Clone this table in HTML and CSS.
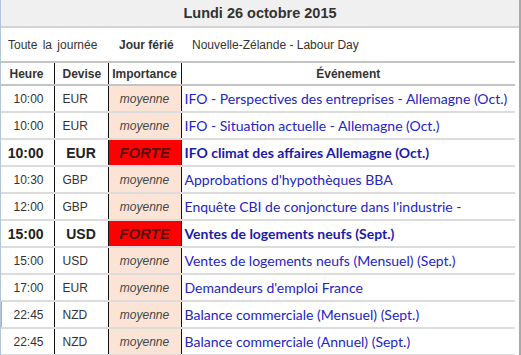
FILE: index.html
```html
<!DOCTYPE html>
<html lang="fr">
<head>
<meta charset="utf-8">
<title>Calendrier économique</title>
<link rel="stylesheet" href="styles.css">
</head>
<body>
<div class="panel">
  <div class="title">Lundi 26 octobre 2015</div>
  <div class="holiday">
    <span class="h-time">Toute la journée</span>
    <span class="h-label">Jour férié</span>
    <span class="h-text">Nouvelle-Zélande - Labour Day</span>
  </div>
  <table class="cal">
    <thead>
      <tr>
        <th class="c-time">Heure</th>
        <th class="c-cur">Devise</th>
        <th class="c-imp">Importance</th>
        <th class="c-ev">Événement</th>
      </tr>
    </thead>
    <tbody>
      <tr><td class="c-time">10:00</td><td class="c-cur">EUR</td><td class="c-imp">moyenne</td><td class="c-ev">IFO - Perspectives des entreprises - Allemagne (Oct.)</td></tr>
      <tr><td class="c-time">10:00</td><td class="c-cur">EUR</td><td class="c-imp">moyenne</td><td class="c-ev">IFO - Situation actuelle - Allemagne (Oct.)</td></tr>
      <tr class="strong"><td class="c-time">10:00</td><td class="c-cur">EUR</td><td class="c-imp">FORTE</td><td class="c-ev">IFO climat des affaires Allemagne (Oct.)</td></tr>
      <tr><td class="c-time">10:30</td><td class="c-cur">GBP</td><td class="c-imp">moyenne</td><td class="c-ev">Approbations d'hypothèques BBA</td></tr>
      <tr><td class="c-time">12:00</td><td class="c-cur">GBP</td><td class="c-imp">moyenne</td><td class="c-ev">Enquête CBI de conjoncture dans l'industrie -</td></tr>
      <tr class="strong"><td class="c-time">15:00</td><td class="c-cur">USD</td><td class="c-imp">FORTE</td><td class="c-ev">Ventes de logements neufs (Sept.)</td></tr>
      <tr><td class="c-time">15:00</td><td class="c-cur">USD</td><td class="c-imp">moyenne</td><td class="c-ev">Ventes de logements neufs (Mensuel) (Sept.)</td></tr>
      <tr><td class="c-time">17:00</td><td class="c-cur">EUR</td><td class="c-imp">moyenne</td><td class="c-ev">Demandeurs d'emploi France</td></tr>
      <tr class="marked"><td class="c-time">22:45</td><td class="c-cur">NZD</td><td class="c-imp">moyenne</td><td class="c-ev">Balance commerciale (Mensuel) (Sept.)</td></tr>
      <tr><td class="c-time">22:45</td><td class="c-cur">NZD</td><td class="c-imp">moyenne</td><td class="c-ev">Balance commerciale (Annuel) (Sept.)</td></tr>
    </tbody>
  </table>
</div>
</body>
</html>
```

FILE: styles.css
```css
* { box-sizing: border-box; }
html, body { margin: 0; padding: 0; background: #fff; }
body {
  font-family: "Liberation Sans", Arial, sans-serif;
  color: #333;
  overflow: hidden;
}
.panel {
  width: 521px;
  height: 355px;
  border-left: 1px solid #b4c6da;
  border-right: 2px solid #a9a9a9;
  overflow: hidden;
}
.title {
  height: 28px;
  background: #f0f0f0;
  border-bottom: 2px solid #d4d4d4;
  font-weight: bold;
  font-size: 14.5px;
  line-height: 26px;
  text-align: center;
  color: #333;
}
.holiday {
  height: 35px;
  border-bottom: 2px solid #c4c4c4;
  display: flex;
  align-items: center;
  font-size: 12px;
  padding-left: 7px;
  color: #333;
  width: 514px;
}
.h-time { width: 111px; word-spacing: 2px; }
.h-label { font-weight: bold; width: 73px; }
.cal {
  border-collapse: collapse;
  table-layout: fixed;
  width: 514px;
}
.cal th {
  height: 22px;
  font-size: 12px;
  font-weight: bold;
  color: #333;
  border-bottom: 2px solid #c4c4c4;
  padding: 0;
}
.cal td {
  height: 27px;
  font-size: 12px;
  border-bottom: 2px solid #dcdcdc;
  padding: 0;
}
.c-time { width: 53px; text-align: right; padding-right: 10px !important; border-right: 1px solid #111; }
.c-cur { width: 54px; text-align: left; padding-left: 8px !important; border-right: 1px solid #111; }
.c-imp { width: 73px; text-align: center; border-right: 1px solid #111; }
th.c-ev { text-align: center; }
td.c-imp { background: #fbe4d5; font-style: italic; color: #444; }
td.c-ev {
  font-family: Lato, "Open Sans", sans-serif;
  font-size: 14px;
  color: #2424c8;
  padding-left: 3px;
  white-space: nowrap;
  overflow: hidden;
}
.strong td { font-weight: bold; font-size: 14px; color: #222; }
.strong td.c-cur { text-align: center; padding-left: 0 !important; }
.strong td.c-imp { background: #ff0000; color: #5a0f0f; font-size: 15px; }
.strong td.c-ev { color: #1a1aa8; font-size: 14px; }
.marked td.c-time { box-shadow: inset 1px 0 0 #f0a040; }
```
